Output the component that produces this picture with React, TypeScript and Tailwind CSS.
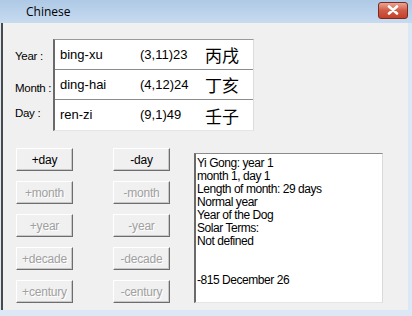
import React from 'react';

const rows = [
    { label: 'Year :', name: 'bing-xu', code: '(3,11)23', han: '丙戌' },
    { label: 'Month :', name: 'ding-hai', code: '(4,12)24', han: '丁亥' },
    { label: 'Day :', name: 'ren-zi', code: '(9,1)49', han: '壬子' },
];

const buttons = [
    ['+day', '-day', true],
    ['+month', '-month', false],
    ['+year', '-year', false],
    ['+decade', '-decade', false],
    ['+century', '-century', false],
] as const;

const info = [
    'Yi Gong: year 1',
    'month 1, day 1',
    'Length of month: 29 days',
    'Normal year',
    'Year of the Dog',
    'Solar Terms:',
    'Not defined',
    '',
    '',
    '-815 December 26',
];

const Btn: React.FC<{ text: string; enabled: boolean }> = ({ text, enabled }) => (
    <div
        className={`w-[57px] h-[23px] flex items-center justify-center bg-[#f0f0f0] border border-t-white border-l-white border-r-[#6d6d6d] border-b-[#6d6d6d] shadow-[inset_-1px_-1px_0_#c8c8c8] text-[12px] tracking-[-0.2px] ${
            enabled ? 'text-black' : 'text-[#a0a0a0] [text-shadow:1px_1px_0_#ffffff]'
        }`}
    >
        {text}
    </div>
);

const App: React.FC = () => {
    return (
        <div className="w-[412px] h-[316px] flex flex-col bg-[#dce8f5] overflow-hidden font-['Liberation_Sans',Arial,sans-serif]">
            {/* title bar */}
            <div className="h-[23px] flex items-center justify-between bg-gradient-to-b from-[#aec9e6] to-[#c7dbf0] pl-[26px] pr-[4px]">
                <span className="text-[12px] text-black font-['Open_Sans',sans-serif] leading-none">Chinese</span>
                <div className="w-[30px] h-[17px] -mt-[3px] rounded-[3px] border border-[#7a2a20] bg-gradient-to-b from-[#e9a596] via-[#cf5b45] to-[#c3402a] flex items-center justify-center">
                    <svg width="12" height="10" viewBox="0 0 12 10">
                        <path d="M2 1.5 L10 8.5 M10 1.5 L2 8.5" stroke="#ffffff" strokeWidth="2.6" strokeLinecap="round" />
                    </svg>
                </div>
            </div>

            <div className="flex-1 flex pl-[1px] pr-[4px] pb-[6px]">
                <div className="flex-1 border-l-2 border-[#4a4a4a] bg-[#f0f0f0]">
                    {/* pillar table */}
                    <div className="flex mt-[16px]">
                        <div className="w-[50px] pl-[12px] text-[11.5px] tracking-[-0.3px] text-black whitespace-nowrap">
                            <div className="h-[31px] pt-[9px]">Year :</div>
                            <div className="h-[31px] pt-[10px]">Month :</div>
                            <div className="h-[31px] pt-[4px]">Day :</div>
                        </div>
                        <div className="w-[201px] h-[92px] bg-white border-t border-t-[#9a9a9a] border-l-2 border-l-[#6a6a6a] border-r border-r-[#dcdcdc] border-b border-b-[#e6e6e6] text-[13px] text-black">
                            {rows.map((r, i) => (
                                <div
                                    key={r.name}
                                    className={`h-[30px] flex items-center ${i < 2 ? 'border-b border-b-[#8c8c8c]' : ''}`}
                                >
                                    <span className="w-[85px] pl-[5px]">{r.name}</span>
                                    <span className="w-[65px]">{r.code}</span>
                                    <span className="text-[17px] leading-none font-['Noto_Sans_CJK_SC',sans-serif]">{r.han}</span>
                                </div>
                            ))}
                        </div>
                    </div>

                    {/* buttons + info */}
                    <div className="flex mt-[16px]">
                        <div className="flex flex-col gap-[10px] pl-[13px]">
                            {buttons.map(([a, b, en]) => (
                                <div key={a} className="flex gap-[40px]">
                                    <Btn text={a} enabled={en} />
                                    <Btn text={b} enabled={en} />
                                </div>
                            ))}
                        </div>
                        <div className="ml-[24px] mt-[5px] w-[189px] h-[150px] bg-white border-t border-t-[#8a8a8a] border-l-2 border-l-[#6a6a6a] border-r border-r-[#dadada] border-b border-b-[#e4e4e4] pl-[1px] pt-[3px] text-[12px] leading-[13px] text-black tracking-[-0.45px]">
                            {info.map((l, i) => (
                                <div key={i} className="h-[13px]">{l}</div>
                            ))}
                        </div>
                    </div>
                </div>
            </div>
        </div>
    );
};

export default App;
